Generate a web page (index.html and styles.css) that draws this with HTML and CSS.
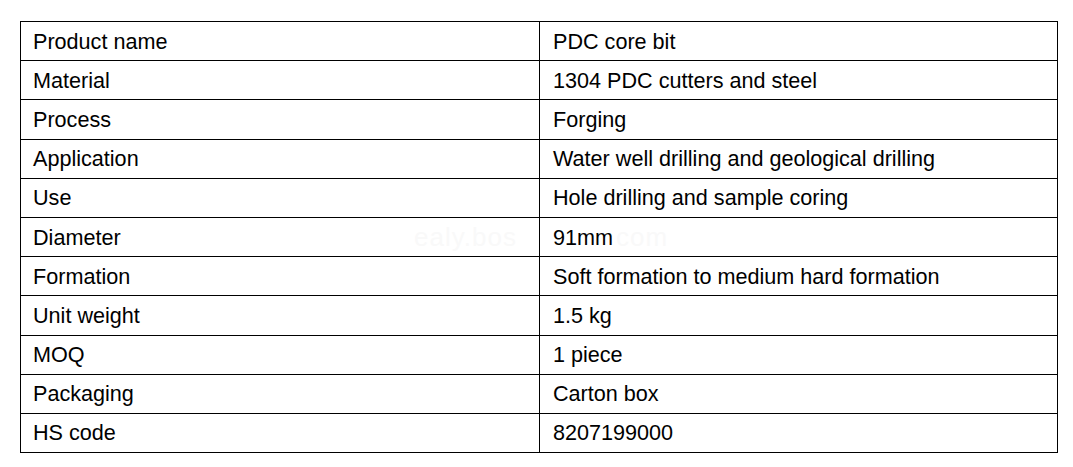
FILE: index.html
```html
<!DOCTYPE html>
<html>
<head>
<meta charset="utf-8">
<link rel="stylesheet" href="styles.css">
</head>
<body>
<div class="wrap">
<table class="spec">
<tr><td>Product name</td><td>PDC core bit</td></tr>
<tr><td>Material</td><td>1304 PDC cutters and steel</td></tr>
<tr><td>Process</td><td>Forging</td></tr>
<tr><td>Application</td><td>Water well drilling and geological drilling</td></tr>
<tr><td>Use</td><td>Hole drilling and sample coring</td></tr>
<tr><td>Diameter</td><td>91mm</td></tr>
<tr><td>Formation</td><td>Soft formation to medium hard formation</td></tr>
<tr><td>Unit weight</td><td>1.5 kg</td></tr>
<tr><td>MOQ</td><td>1 piece</td></tr>
<tr><td>Packaging</td><td>Carton box</td></tr>
<tr><td>HS code</td><td>8207199000</td></tr>
</table>
<span class="watermark wm-left">ealy.bos</span>
<span class="watermark wm-right">com</span>
</div>
</body>
</html>
```
FILE: styles.css
```css
html, body {
  margin: 0;
  padding: 0;
  background: #ffffff;
}
.wrap {
  position: relative;
  padding: 21px 0 0 20px;
}
.spec {
  border-collapse: collapse;
  width: 1038px;
  table-layout: fixed;
  font-family: "Liberation Sans", Arial, sans-serif;
  font-size: 21.6px;
  color: #000000;
}
.spec td {
  border: 1px solid #000000;
  height: 39.2px;
  padding: 1px 0 0 12px;
  line-height: 24px;
  vertical-align: middle;
  box-sizing: border-box;
}
.spec td:first-child {
  width: 519px;
}
.spec td:last-child {
  padding-left: 13px;
}
.watermark {
  position: absolute;
  top: 222px;
  font-family: "Liberation Sans", Arial, sans-serif;
  font-size: 26px;
  letter-spacing: 1px;
  color: #f9f9f9;
  pointer-events: none;
}
.wm-left {
  left: 414px;
}
.wm-right {
  left: 616px;
}
```
